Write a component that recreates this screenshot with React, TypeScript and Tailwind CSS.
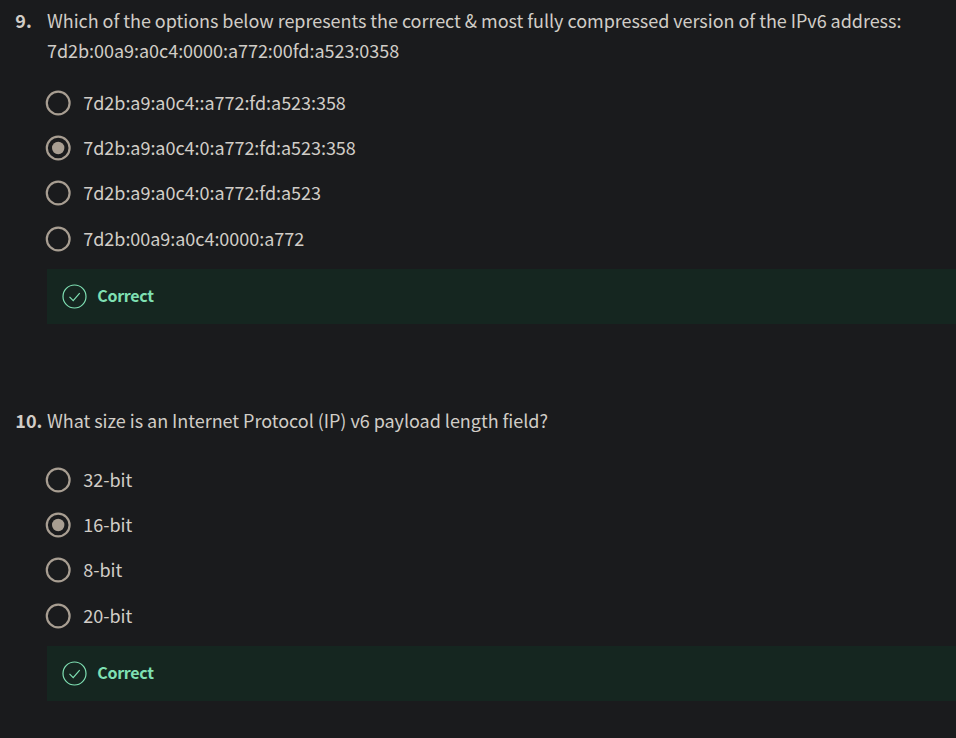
const f = "'Source Sans Pro','Noto Sans CJK SC',sans-serif";
function Q({ n, lines, opts, cls, list }: { n: string; lines: string[]; opts: string[]; cls: string; list: string }) {
  return (
    <section className={cls}>
      <div className="flex text-[18px] leading-[30px] tracking-[-0.037px]">
        <b className="w-8 shrink-0 pl-[0.3px] font-bold">{n}</b>
        <div>{lines.map((l) => <div key={l} className="whitespace-nowrap">{l}</div>)}</div>
      </div>
      <ul className={list}>
        {opts.map((o, i) => (
          <li key={o} className="flex h-[45.2px] items-center text-[18px] tracking-[-0.04px] last:h-[46px]">
            <svg width="26" height="26" viewBox="0 0 26 26" className="-ml-0.5 mr-3">
              <circle cx="13.2" cy="13" r="11.4" fill="none" stroke="#a89e92" strokeWidth="2.2" />
              {i === 1 && <circle cx="13.2" cy="13" r="6.2" fill="#a89e92" />}
            </svg>
            <span className="pl-[0.3px]">{o}</span>
          </li>
        ))}
      </ul>
      <div className="ml-8 flex h-[55px] items-center bg-[#152620] pl-[15px] text-[16px] font-bold tracking-[-0.28px] text-[#7fe0b3]">
        <svg width="25" height="25" viewBox="0 0 25 25" fill="none" stroke="currentColor" className="mr-2.5">
          <circle cx="12.5" cy="12.5" r="11.5" strokeWidth="1.2" />
          <path d="M7.5 12.9l3.7 3.7 6.5-7.4" strokeWidth="1.2" />
        </svg>
        <span className="pb-[3px] pl-[0.2px]">Correct</span>
      </div>
    </section>
  );
}
export default function App() {
  return (
    <main className="h-[738px] overflow-hidden bg-[#1a1b1d] pl-[15px] text-[#d1cdc7]" style={{ fontFamily: f }}>
      <Q n="9." cls="pt-[5px]" list="ml-8 mt-[15px] h-[189px]" lines={["Which of the options below represents the correct & most fully compressed version of the IPv6 address:", "7d2b:00a9:a0c4:0000:a772:00fd:a523:0358"]} opts={["7d2b:a9:a0c4::a772:fd:a523:358", "7d2b:a9:a0c4:0:a772:fd:a523:358", "7d2b:a9:a0c4:0:a772:fd:a523", "7d2b:00a9:a0c4:0000:a772"]} />
      <Q n="10." cls="pt-[81px]" list="ml-8 mt-[22px] h-[189px]" lines={["What size is an Internet Protocol (IP) v6 payload length field?"]} opts={["32-bit", "16-bit", "8-bit", "20-bit"]} />
    </main>
  );
}
